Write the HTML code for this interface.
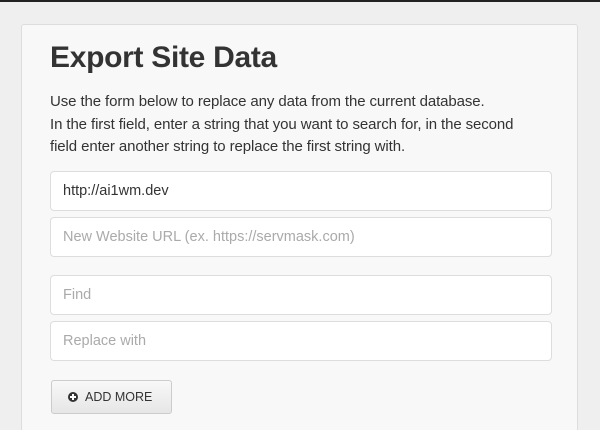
<!DOCTYPE html><html><head><style>
html{overflow:hidden;height:430px}
body{margin:0;width:600px;height:430px;overflow:hidden;background:#efefef;font-family:"Liberation Sans",sans-serif;border-top:2px solid #222;box-sizing:border-box;position:relative}
.p{position:absolute;left:21px;top:22px;width:555px;height:420px;background:#f8f8f8;border:1px solid #ddd;border-radius:3px}
h1{position:absolute;left:50px;top:39px;margin:0;font-size:30px;color:#333;font-weight:bold;letter-spacing:-0.3px}
.t{position:absolute;left:50px;top:89px;font-size:15px;line-height:22.5px;color:#333;letter-spacing:-0.1px}
.i{position:absolute;left:50px;width:502px;height:40px;background:#fff;border:1px solid #ddd;border-radius:4px;font-size:14.5px;color:#aaa;line-height:38px;padding-left:12px;box-sizing:border-box}
.b{position:absolute;left:51px;top:378px;width:121px;height:34px;border:1px solid #ccc;border-radius:3px;background:linear-gradient(#f8f8f8,#e6e6e6);box-sizing:border-box;font-size:12.5px;color:#333;line-height:32px}
.b span{display:inline-block;width:10px;height:10px;border-radius:50%;background:#333;margin:0 7px 0 16px;vertical-align:-1px;position:relative}
.b span:before{content:"";position:absolute;left:2px;top:4px;width:6px;height:2px;background:#fff}
.b span:after{content:"";position:absolute;left:4px;top:2px;width:2px;height:6px;background:#fff}
</style></head><body>
<div class="p"></div>
<h1>Export Site Data</h1>
<div class="t">Use the form below to replace any data from the current database.<br>In the first field, enter a string that you want to search for, in the second<br>field enter another string to replace the first string with.</div>
<div class="i" style="top:169px;color:#333">http://ai1wm.dev</div>
<div class="i" style="top:215px">New Website URL (ex. https://servmask.com)</div>
<div class="i" style="top:273px">Find</div>
<div class="i" style="top:319px">Replace with</div>
<div class="b"><span></span>ADD MORE</div>
</body></html>
